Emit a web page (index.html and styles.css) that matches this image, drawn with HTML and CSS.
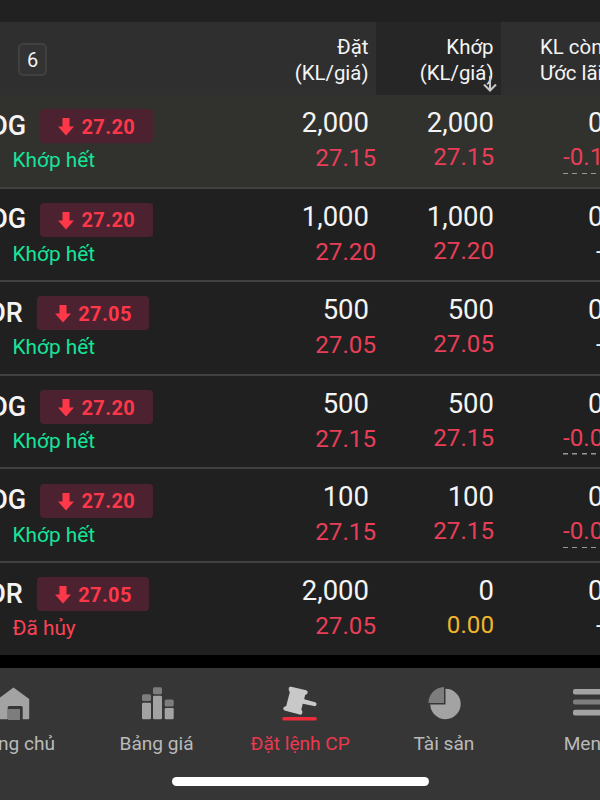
FILE: index.html
```
<!DOCTYPE html>
<html lang="vi">
<head>
<meta charset="utf-8">
<title>Sổ lệnh</title>
<link rel="stylesheet" href="styles.css">
</head>
<body>
<svg class="defs" aria-hidden="true"><symbol id="down" viewBox="0 0 16 18"><path d="M4.500 0h7v8.500H16L8 17.500 0 8.500h4.500z"/></symbol></svg>
<header class="head">
  <div class="head-name"><span class="count">6</span></div>
  <div class="head-cell">Đặt<br>(KL/giá)</div>
  <div class="head-cell sorted">Khớp<br>(KL/giá)
    <svg class="sort" viewBox="0 0 14 16"><path d="M7 0v14M1 8.500l6 6 6-6"/></svg>
  </div>
  <div class="head-cell wide">KL còn lại<br>Ước lãi/lỗ</div>
</header>
<main>
  <section class="row active">
    <div class="name"><div class="symbol">HDG<span class="badge"><svg><use href="#down"/></svg>27.20</span></div><div class="status">Khớp hết</div></div>
    <div class="cell placed"><b>2,000</b><i>27.15</i></div>
    <div class="cell matched"><b>2,000</b><i>27.15</i></div>
    <div class="cell rest"><b>0</b><i class="loss">-0.14%</i></div>
  </section>
  <section class="row">
    <div class="name"><div class="symbol">HDG<span class="badge"><svg><use href="#down"/></svg>27.20</span></div><div class="status">Khớp hết</div></div>
    <div class="cell placed"><b>1,000</b><i>27.20</i></div>
    <div class="cell matched"><b>1,000</b><i>27.20</i></div>
    <div class="cell rest"><b>0</b><i class="none">--</i></div>
  </section>
  <section class="row">
    <div class="name"><div class="symbol">PDR<span class="badge"><svg><use href="#down"/></svg>27.05</span></div><div class="status">Khớp hết</div></div>
    <div class="cell placed"><b>500</b><i>27.05</i></div>
    <div class="cell matched"><b>500</b><i>27.05</i></div>
    <div class="cell rest"><b>0</b><i class="none">--</i></div>
  </section>
  <section class="row">
    <div class="name"><div class="symbol">HDG<span class="badge"><svg><use href="#down"/></svg>27.20</span></div><div class="status">Khớp hết</div></div>
    <div class="cell placed"><b>500</b><i>27.15</i></div>
    <div class="cell matched"><b>500</b><i>27.15</i></div>
    <div class="cell rest"><b>0</b><i class="loss">-0.03%</i></div>
  </section>
  <section class="row">
    <div class="name"><div class="symbol">HDG<span class="badge"><svg><use href="#down"/></svg>27.20</span></div><div class="status">Khớp hết</div></div>
    <div class="cell placed"><b>100</b><i>27.15</i></div>
    <div class="cell matched"><b>100</b><i>27.15</i></div>
    <div class="cell rest"><b>0</b><i class="loss">-0.01%</i></div>
  </section>
  <section class="row">
    <div class="name"><div class="symbol">PDR<span class="badge"><svg><use href="#down"/></svg>27.05</span></div><div class="status cancelled">Đã hủy</div></div>
    <div class="cell placed"><b>2,000</b><i>27.05</i></div>
    <div class="cell matched"><b>0</b><i class="zero">0.00</i></div>
    <div class="cell rest"><b>0</b><i class="none">--</i></div>
  </section>
</main>
<nav class="nav">
  <div class="tabs">
    <div class="tab"><svg viewBox="0 0 36 36"><path class="lo" d="M13 24h12v11H13z"/><path d="M18.500 2.500 34.200 14v19.200q0 1-1 1h-5.500V22.500q0-1.500-1.500-1.500h-12q-1.500 0-1.500 1.500v11.700H4q-1 0-1-1V14z"/></svg>Trang chủ</div>
    <div class="tab"><svg viewBox="0 0 36 36"><rect class="lo" x="3" y="9.300" width="9" height="6.700" rx="1.500"/><rect class="lo" x="14" y="2.300" width="9" height="6.900" rx="1.500"/><rect class="lo" x="25.700" y="14.500" width="9" height="6.900" rx="1.500"/><rect x="3" y="17.800" width="9" height="16.400" rx="1.300"/><rect x="14" y="10.800" width="9" height="23.400" rx="1.300"/><rect x="25.700" y="23" width="9" height="11.200" rx="1.300"/></svg>Bảng giá</div>
    <div class="tab current"><svg viewBox="0 0 36 36"><path d="M6.800 3Q7.300 1.200 9.200 1.800L24.200 5.300Q26.200 6 25.600 7.900 25.200 9.600 23.100 9.900L22.200 14.200 33.200 17.200Q35 17.900 34.500 19.700 33.900 21.500 32 21.100L20.800 18.800 19.300 24.600Q20.900 26.200 20.300 28.100 19.700 30.300 17.600 29.600L2.500 25.400Q.7 24.700 1.400 22.800 2 21.200 4.200 20.900L7.800 7.200Q6.200 5.400 6.800 3Z"/><rect class="line" x=".300" y="32" width="34.500" height="3.500" rx="1.600"/></svg>Đặt lệnh CP</div>
    <div class="tab"><svg viewBox="0 0 36 36"><path d="M19.500 3.800a15.200 15.200 0 1 1-15.200 15.600h15.200z"/><path class="lo" d="M18 2v16H2.500A16 16 0 0 1 18 2z"/></svg>Tài sản</div>
    <div class="tab"><svg viewBox="0 0 36 36"><rect x="3" y="4" width="31" height="5.600" rx="2"/><rect class="lo" x="3" y="14.500" width="31" height="5" rx="2"/><rect x="3" y="24.800" width="31" height="5.600" rx="2"/></svg>Menu</div>
  </div>
  <div class="home"></div>
</nav>
</body>
</html>
```
FILE: styles.css
```
* { box-sizing: border-box; }
body {
  margin: 0;
  width: 600px;
  height: 800px;
  padding-top: 22px;
  overflow: hidden;
  display: flex;
  flex-direction: column;
  background: linear-gradient(#212121 22px, #000 22px);
  font-family: Roboto, "Liberation Sans", sans-serif;
  color: #f4f4f4;
}
.defs { position: absolute; width: 0; height: 0; }
.head, .row {
  display: grid;
  grid-template-columns: 251px 125px 125px 125px;
  flex: none;
}
.head { height: 73px; background: #2f2f2f; }
.head-name { padding: 21px 0 0 18px; }
.count {
  display: flex;
  align-items: center;
  justify-content: center;
  width: 29px;
  height: 33px;
  border: 2px solid #404040;
  border-radius: 5px;
  background: #333;
  font-size: 20px;
}
.head-cell {
  padding: 12px 7.500px 0 0;
  font-size: 20.400px;
  line-height: 26px;
  text-align: right;
  white-space: nowrap;
}
.head-cell.sorted { position: relative; background: #262626; }
.sort {
  position: absolute;
  right: 4px;
  bottom: 3px;
  width: 14px;
  height: 16px;
  fill: none;
  stroke: #c9c9c9;
  stroke-width: 2;
}
.head-cell.wide { padding-left: 39px; text-align: left; }
.row {
  height: 93.600px;
  border-bottom: 2px solid #414141;
  background: #202020;
}
.row.active { background: #31312e; }
.row:last-child { border-bottom: 0; height: 92px; }
.symbol {
  display: flex;
  align-items: center;
  height: 34px;
  margin: 14.300px 0 0 -29px;
  font-size: 27px;
  font-weight: 500;
  line-height: 33px;
}
.badge {
  display: flex;
  align-items: center;
  width: 112.500px;
  height: 34px;
  margin-left: 14px;
  padding: 2px 0 0 18px;
  border-radius: 4px;
  background: #4c2230;
  color: #ff3849;
  font-size: 20px;
  font-weight: 700;
  letter-spacing: .4px;
}
.badge svg { width: 16px; height: 18px; margin-right: 7.300px; fill: currentColor; }
.status {
  padding-left: 12.500px;
  font-size: 20.800px;
  line-height: 34px;
  color: #14e59a;
}
.status.cancelled { color: #fb4257; }
.cell { display: flex; flex-direction: column; align-items: flex-end; }
.cell b { font-size: 27.500px; font-weight: 400; line-height: 36px; }
.cell i { font-size: 24.200px; font-style: normal; line-height: 34px; color: #e83e57; }
.placed { padding-top: 10px; }
.placed b { margin-right: 7px; line-height: 36px; }
.matched { padding: 11px 7px 0 0; }
.matched b { line-height: 34px; }
.cell i.zero { color: #efb62a; }
.rest { padding-top: 11px; align-items: flex-start; }
.rest b { padding-left: 87px; line-height: 34px; }
.rest i.loss {
  margin-left: 62px;
  height: 34px;
  background: repeating-linear-gradient(90deg, #999 0 5px, transparent 5px 9.300px) 0 100% / 100% 1.500px no-repeat;
}
.rest i.none { margin-left: 95px; color: #f4f4f4; }
.nav { flex: none; margin-top: auto; height: 132px; background: #363636; }
.tabs {
  display: grid;
  grid-template-columns: repeat(5, 143.700px);
  margin-left: -59px;
  padding-top: 17px;
}
.tab {
  display: flex;
  flex-direction: column;
  align-items: center;
  font-size: 19.100px;
  line-height: 45px;
  color: #bababa;
}
.tab svg { width: 36px; height: 36px; fill: #a3a3a3; }
.tab .lo { fill: #7d7d7d; }
.tab.current { color: #ed3850; }
.tab.current svg { fill: #c8c8c8; }
.tab .line { fill: #ed2b3b; }
.home { width: 257px; height: 9px; margin: 11px auto 0; border-radius: 5px; background: #fff; }
```
